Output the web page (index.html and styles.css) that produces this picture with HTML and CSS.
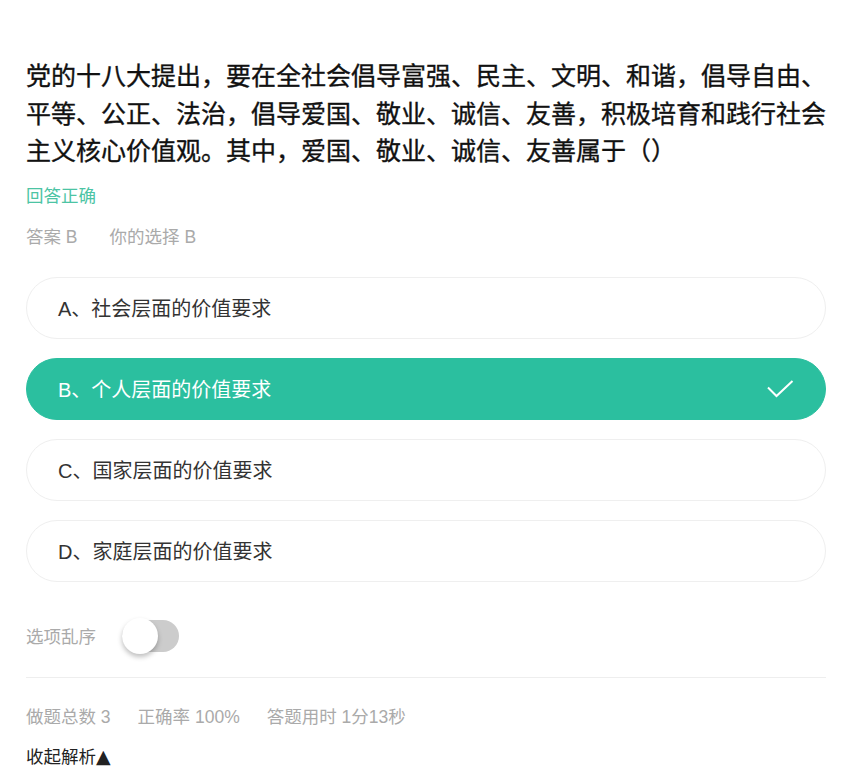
FILE: index.html
```html
<!DOCTYPE html>
<html lang="zh-CN">
<head>
    <meta charset="UTF-8">
    <meta name="viewport" content="width=device-width, initial-scale=1.0">
    <title>答题解析</title>
    <link rel="stylesheet" href="styles.css">
</head>
<body>
    <div class="quiz">
        <h2 class="question">党的十八大提出，要在全社会倡导富强、民主、文明、和谐，倡导自由、平等、公正、法治，倡导爱国、敬业、诚信、友善，积极培育和践行社会主义核心价值观。其中，爱国、敬业、诚信、友善属于（）</h2>

        <div class="result">回答正确</div>
        <div class="answer">
            <span>答案 B</span>
            <span>你的选择 B</span>
        </div>

        <ul class="options">
            <li class="option">A、社会层面的价值要求</li>
            <li class="option selected">
                B、个人层面的价值要求
                <svg class="check" width="27" height="18" viewBox="0 0 27 18">
                    <polyline points="1,7.5 9.5,16 25.5,1" fill="none" stroke="#fff" stroke-width="2"/>
                </svg>
            </li>
            <li class="option">C、国家层面的价值要求</li>
            <li class="option">D、家庭层面的价值要求</li>
        </ul>

        <div class="shuffle">
            <span>选项乱序</span>
            <div class="switch"><div class="knob"></div></div>
        </div>

        <div class="stats">
            <span>做题总数 3</span>
            <span>正确率 100%</span>
            <span>答题用时 1分13秒</span>
        </div>

        <div class="toggle-analysis">收起解析<span class="arrow">▲</span></div>
    </div>
</body>
</html>
```

FILE: styles.css
```css
/* Page */
body {
    margin: 0;
    padding: 0;
    background-color: #ffffff;
    font-family: "Liberation Sans", "Noto Sans CJK SC", sans-serif;
    color: #333;
}

.quiz {
    padding: 56px 27px 20px 26px;
}

/* Question title */
.question {
    margin: 0;
    font-family: "Noto Sans CJK SC", sans-serif;
    font-size: 25px;
    font-weight: 400;
    line-height: 37.5px;
    color: #111;
    -webkit-text-stroke: 0.35px #111; /* medium weight look */
}

.result {
    margin-top: 15px;
    font-size: 17.5px;
    line-height: 24px;
    color: #4cc4a4;
}

.answer {
    margin-top: 17px;
    display: flex;
    gap: 32px;
    font-size: 17.5px;
    line-height: 24px;
    color: #aaa;
}

/* Options */
.options {
    list-style: none;
    margin: 28px 0 0;
    padding: 0;
    display: flex;
    flex-direction: column;
    gap: 19px;
}

.option {
    height: 62px;
    box-sizing: border-box;
    border: 1px solid #efefef;
    border-radius: 31px;
    padding: 0 31px 0 31px;
    display: flex;
    align-items: center;
    justify-content: space-between;
    font-size: 20px;
    color: #333;
}

.option.selected {
    background-color: #2bbf9f;
    border-color: #2bbf9f;
    color: #fff;
}

.check {
    display: block;
}

/* Shuffle switch */
.shuffle {
    margin-top: 36px;
    display: flex;
    align-items: center;
    gap: 26px;
    font-size: 17.5px;
    color: #aaa;
    padding-bottom: 23px;
    border-bottom: 1px solid #eee;
}

.switch {
    position: relative;
    width: 57px;
    height: 32px;
    border-radius: 16px;
    background-color: #cccccc;
    margin: 2px 0;
}

.knob {
    position: absolute;
    left: 0;
    top: -2px;
    width: 36px;
    height: 36px;
    border-radius: 50%;
    background-color: #fff;
    box-shadow: 0 3px 5px rgba(0, 0, 0, 0.25);
}

/* Stats */
.stats {
    margin-top: 27px;
    display: flex;
    gap: 27px;
    font-size: 17.5px;
    line-height: 24px;
    color: #aaa;
}

.toggle-analysis {
    margin-top: 16px;
    font-size: 17.5px;
    line-height: 24px;
    height: 24px;
    color: #222;
}

.arrow {
    font-family: "DejaVu Sans", sans-serif;
    font-size: 19px;
    line-height: 1;
}
```
